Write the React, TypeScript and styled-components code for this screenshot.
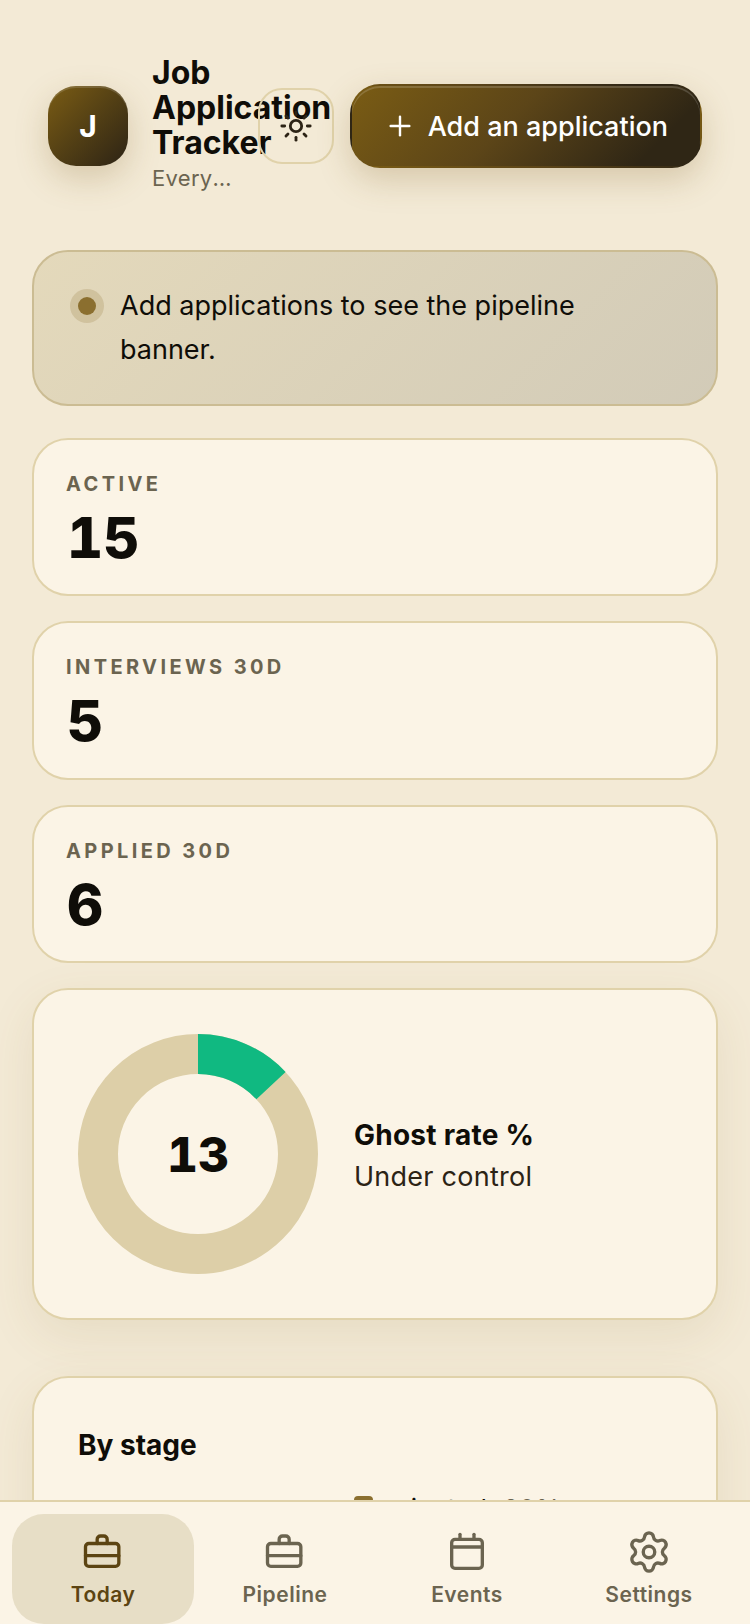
import styled, { createGlobalStyle } from "styled-components";
import { Plus, Settings, Sun } from "lucide-react";

const colours = {
  page: "#f3ead6",
  card: "#fbf4e6",
  line: "#e0d2aa",
  track: "#ddcfa8",
  ink: "#0f0d08",
  muted: "#6b6450",
  brand: "#5c4412",
  green: "#10b981",
};

const GlobalStyle = createGlobalStyle`
  html, body {
    margin: 0;
    height: 100%;
    overflow: hidden;
    background: ${colours.page};
  }
  body {
    font-family: Inter, "Noto Sans", sans-serif;
    color: ${colours.ink};
  }
`;

const Page = styled.main`
  padding: 33px 32px 0;
`;

const Header = styled.header`
  display: flex;
  align-items: center;
  padding: 22px 16px;
  margin-bottom: 31px;
`;

const Avatar = styled.div`
  flex: none;
  display: flex;
  align-items: center;
  justify-content: center;
  width: 80px;
  height: 80px;
  margin-right: 24px;
  border-radius: 28px;
  background: linear-gradient(135deg, #7a5c14, #2c2315);
  box-shadow: 0 12px 32px rgba(130, 100, 40, 0.25), inset 0 2px 0 rgba(255, 255, 255, 0.14);
  color: #fff;
  font-size: 30px;
  font-weight: 700;
`;

const TitleBlock = styled.div`
  flex: 1;
  min-width: 0;
`;

const Title = styled.h1`
  margin: 0;
  font-size: 32px;
  line-height: 35px;
  font-weight: 700;
`;

const Subtitle = styled.p`
  margin: 2px 0;
  font-size: 22px;
  line-height: 33px;
  letter-spacing: 0.3px;
  color: ${colours.muted};
  white-space: nowrap;
  overflow: hidden;
  text-overflow: ellipsis;
`;

const ThemeButton = styled.button`
  flex: none;
  display: flex;
  align-items: center;
  justify-content: center;
  width: 76px;
  height: 76px;
  margin: 0 16px 0 24px;
  padding: 0;
  background: transparent;
  border: 2px solid ${colours.line};
  border-radius: 24px;
  color: #2c2315;
`;

const AddButton = styled.button`
  flex: none;
  display: flex;
  align-items: center;
  gap: 12px;
  height: 84px;
  padding: 0 32px;
  border: 2px solid transparent;
  border-radius: 30px;
  background: linear-gradient(135deg, #7a5c14 0%, #5c4518 45%, #2f2615 85%);
  box-shadow: 0 12px 32px rgba(130, 100, 40, 0.25), inset 0 2px 0 rgba(255, 255, 255, 0.16);
  color: #fff;
  font-family: inherit;
  font-size: 27px;
  font-weight: 500;
`;

const Banner = styled.section`
  display: flex;
  align-items: flex-start;
  gap: 16px;
  padding: 32px 36px;
  margin-bottom: 32px;
  border: 2px solid #cbbc93;
  border-radius: 36px;
  background: linear-gradient(135deg, #e4d9bb, #d2cbb8);
  font-size: 27px;
  line-height: 44px;
`;

const Dot = styled.span`
  flex: none;
  width: 18px;
  height: 18px;
  margin: 13px 0 0 8px;
  border-radius: 50%;
  background: #8b6f2f;
  box-shadow: 0 0 0 8px rgba(139, 111, 47, 0.2);
`;

const BannerText = styled.p`
  margin: 0 0 0 8px;
  max-width: 480px;
`;

const Stats = styled.div`
  display: flex;
  flex-direction: column;
  gap: 25px;
  margin-bottom: 25px;
`;

const StatCard = styled.article`
  height: 158.4px;
  box-sizing: border-box;
  padding: 30px 32px;
  background: ${colours.card};
  border: 2px solid ${colours.line};
  border-radius: 36px;
`;

const StatLabel = styled.div`
  font-size: 20px;
  line-height: 28px;
  font-weight: 700;
  letter-spacing: 3.4px;
  color: ${colours.muted};
`;

const StatValue = styled.div`
  margin: 6px 0 0 1px;
  font-size: 56px;
  line-height: 68px;
  font-weight: 800;
  font-variant-numeric: tabular-nums;
`;

const ChartCard = styled.section<{ $mb?: number }>`
  padding: 44px;
  margin-bottom: ${(p) => p.$mb ?? 0}px;
  background: ${colours.card};
  border: 2px solid ${colours.line};
  border-radius: 36px;
  box-shadow: 0 16px 48px rgba(130, 100, 40, 0.1);
`;

const GhostRow = styled.div`
  display: flex;
  align-items: center;
  gap: 36px;
`;

const DonutWrap = styled.div`
  position: relative;
  flex: none;
  width: 240px;
  height: 240px;
`;

const DonutValue = styled.div`
  position: absolute;
  inset: 0;
  display: flex;
  align-items: center;
  justify-content: center;
  font-size: 48px;
  font-weight: 800;
  font-variant-numeric: tabular-nums;
`;

const GhostText = styled.div`
  padding-top: 3px;
`;

const GhostTitle = styled.div`
  font-size: 28px;
  line-height: 42px;
  font-weight: 700;
  letter-spacing: 0.25px;
`;

const GhostNote = styled.div`
  font-size: 27px;
  line-height: 42px;
  letter-spacing: 0.25px;
  color: #2c2315;
`;

const SectionTitle = styled.h2`
  margin: 2px 0 0;
  font-size: 28px;
  line-height: 42px;
  font-weight: 700;
`;

const StageRow = styled.div`
  display: flex;
  gap: 36px;
  margin-top: 23px;
`;

const Legend = styled.ul`
  margin: 0;
  padding: 0;
  list-style: none;
  font-size: 26px;
  line-height: 40px;
`;

const LegendItem = styled.li`
  display: flex;
  align-items: center;
  gap: 12px;
`;

const Swatch = styled.span`
  width: 19px;
  height: 19px;
  margin-bottom: 7px;
  border-radius: 4px;
  background: #8b6f2f;
`;

const Percent = styled.span`
  margin-left: 4px;
  color: ${colours.muted};
`;

const Nav = styled.nav`
  position: fixed;
  left: 0;
  right: 0;
  bottom: 0;
  display: grid;
  grid-template-columns: repeat(4, 182px);
  height: 124px;
  padding: 12px 12px 0;
  box-sizing: border-box;
  background: ${colours.card};
  border-top: 2px solid ${colours.line};
`;

const Tab = styled.a<{ $active?: boolean }>`
  display: flex;
  flex-direction: column;
  align-items: center;
  gap: 8px;
  height: 110px;
  padding-top: 17px;
  box-sizing: border-box;
  border-radius: 32px;
  background: ${(p) => (p.$active ? "#e7dec6" : "transparent")};
  color: ${(p) => (p.$active ? colours.brand : colours.muted)};
  font-size: 21px;
  line-height: 32px;
  font-weight: 600;
  letter-spacing: 0.5px;
`;

const GearIcon = styled(Settings)`
  margin: -2px -3px -4px;
`;

const BriefcaseIcon = () => (
  <svg width="40" height="40" viewBox="0 0 24 24" fill="none" stroke="currentColor" strokeWidth="2" strokeLinecap="round" strokeLinejoin="round">
    <rect x="1.5" y="7.5" width="20" height="13.7" rx="2" />
    <path d="M1.5 14.8h20" />
    <path d="M8.5 7.5V5a2 2 0 0 1 2-2h2a2 2 0 0 1 2 2v2.5" />
  </svg>
);

const CalendarIcon = () => (
  <svg width="40" height="40" viewBox="0 0 24 24" fill="none" stroke="currentColor" strokeWidth="2" strokeLinecap="round" strokeLinejoin="round">
    <rect x="2.8" y="5" width="18.4" height="17.4" rx="2" />
    <path d="M2.8 9.6h18.4" />
    <path d="M7.8 2v3" />
    <path d="M16.2 2v3" />
  </svg>
);

const stats = [
  { label: "ACTIVE", value: 15 },
  { label: "INTERVIEWS 30D", value: 5 },
  { label: "APPLIED 30D", value: 6 },
];

const ghostRate = 13;
const radius = 100;
const circumference = 2 * Math.PI * radius;

const Donut = () => (
  <svg width="240" height="240" viewBox="0 0 240 240">
    <circle cx="120" cy="120" r={radius} fill="none" stroke={colours.track} strokeWidth="40" />
    <circle
      cx="120"
      cy="120"
      r={radius}
      fill="none"
      stroke={colours.green}
      strokeWidth="40"
      strokeDasharray={`${(circumference * ghostRate) / 100} ${circumference}`}
      transform="rotate(-90 120 120)"
    />
  </svg>
);

export default function App() {
  return (
    <>
      <GlobalStyle />
      <Page>
        <Header>
          <Avatar>J</Avatar>
          <TitleBlock>
            <Title>Job Application Tracker</Title>
            <Subtitle>Every application in one place</Subtitle>
          </TitleBlock>
          <ThemeButton aria-label="Toggle theme">
            <Sun size={34} strokeWidth={2} />
          </ThemeButton>
          <AddButton>
            <Plus size={32} strokeWidth={1.8} />
            Add an application
          </AddButton>
        </Header>

        <Banner>
          <Dot />
          <BannerText>Add applications to see the pipeline banner.</BannerText>
        </Banner>

        <Stats>
          {stats.map((s) => (
            <StatCard key={s.label}>
              <StatLabel>{s.label}</StatLabel>
              <StatValue>{s.value}</StatValue>
            </StatCard>
          ))}
        </Stats>

        <ChartCard $mb={56}>
          <GhostRow>
            <DonutWrap>
              <Donut />
              <DonutValue>{ghostRate}</DonutValue>
            </DonutWrap>
            <GhostText>
              <GhostTitle>Ghost rate %</GhostTitle>
              <GhostNote>Under control</GhostNote>
            </GhostText>
          </GhostRow>
        </ChartCard>

        <ChartCard>
          <SectionTitle>By stage</SectionTitle>
          <StageRow>
            <DonutWrap />
            <Legend>
              <LegendItem>
                <Swatch />
                oriented <Percent>20%</Percent>
              </LegendItem>
            </Legend>
          </StageRow>
        </ChartCard>
      </Page>

      <Nav>
        <Tab $active>
          <BriefcaseIcon />
          Today
        </Tab>
        <Tab>
          <BriefcaseIcon />
          Pipeline
        </Tab>
        <Tab>
          <CalendarIcon />
          Events
        </Tab>
        <Tab>
          <GearIcon size={46} strokeWidth={1.75} />
          Settings
        </Tab>
      </Nav>
    </>
  );
}
